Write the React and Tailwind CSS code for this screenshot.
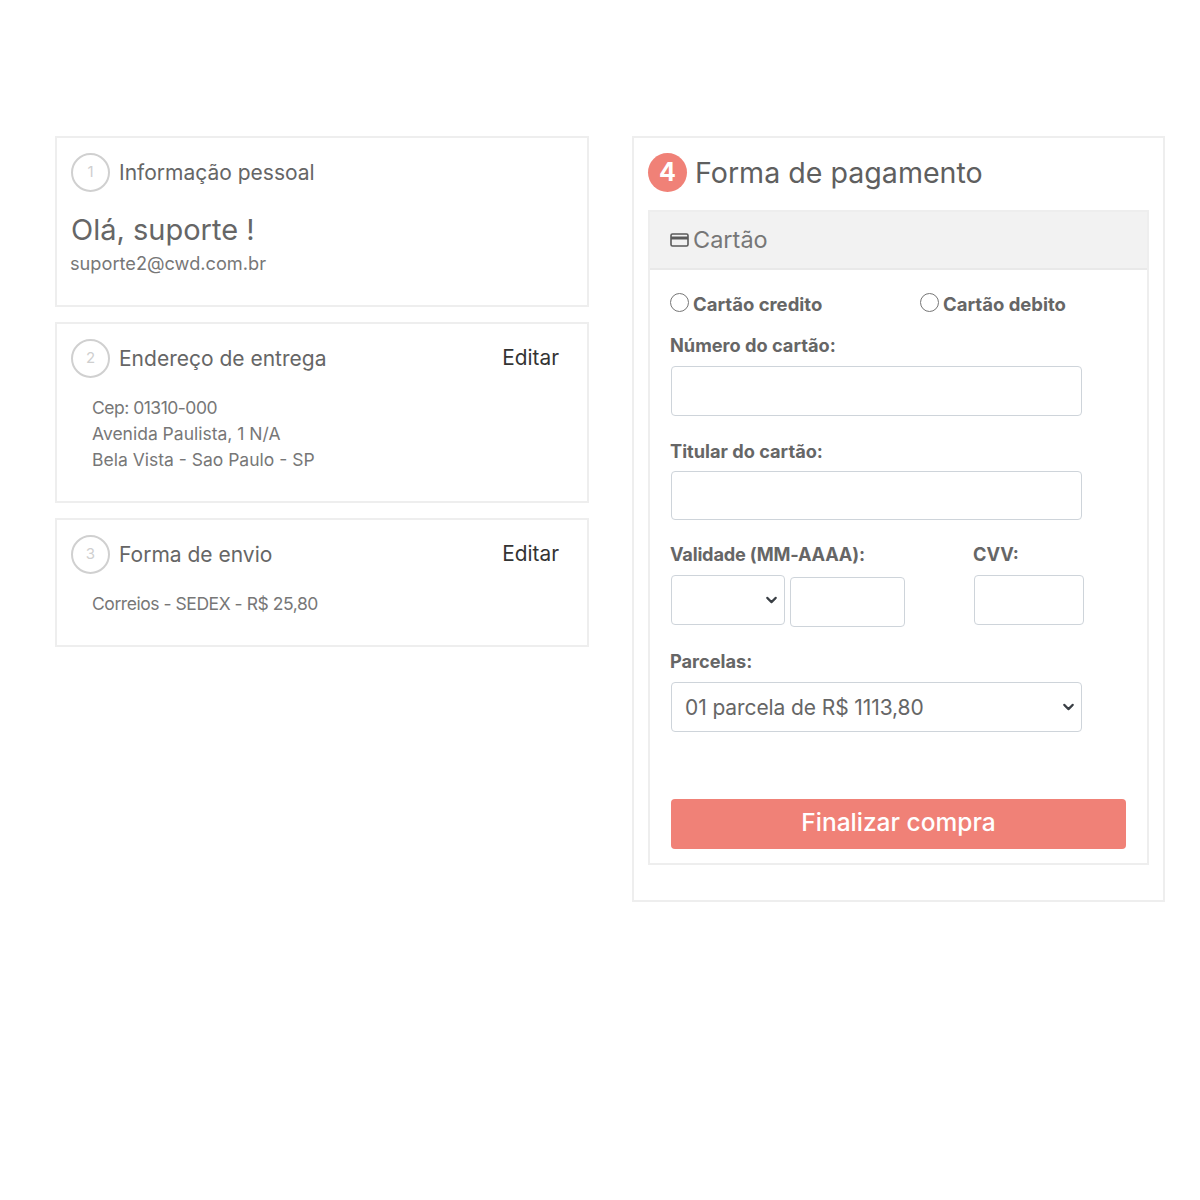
import React from 'react';
import { ChevronDown } from 'lucide-react';

const StepCircle = ({ n }) => (
  <div className="w-[39px] h-[39px] rounded-full border-2 border-[#d0d0d0] flex items-center justify-center text-[15px] text-[#cfcfcf] shrink-0">
    {n}
  </div>
);

const StepHeader = ({ n, title, edit }) => (
  <div className="flex items-center">
    <StepCircle n={n} />
    <h3 className="ml-[9px] text-[21px] leading-[30px] text-[#666666]">{title}</h3>
    {edit && <a className="ml-auto mr-[14px] -mt-[1px] text-[20.8px] leading-[30px] text-[#333333]">Editar</a>}
  </div>
);

const CardIcon = () => (
  <svg width="19" height="16" viewBox="0 0 19 16" className="shrink-0" fill="none">
    <rect x="1" y="2" width="17" height="12" rx="1.5" stroke="#5a5a5a" strokeWidth="1.6" />
    <rect x="1" y="4.5" width="17" height="3" fill="#5a5a5a" />
  </svg>
);

const inputClass = 'block bg-white border border-[#ced4da] rounded-[4px]';
const labelClass = 'block -ml-[1px] text-[18.2px] leading-[26px] font-bold text-[#666666]';

const Select = ({ className, text }) => (
  <div className={`relative ${className}`}>
    <select className={`${inputClass} w-full h-full appearance-none pl-[13px] pt-[1px] text-[21px] tracking-[-0.1px] text-[#666666]`}>
      <option>{text}</option>
    </select>
    <ChevronDown size={17} strokeWidth={3} className="absolute right-[5px] top-1/2 -translate-y-1/2 text-[#3a3f45] pointer-events-none" />
  </div>
);

export default function App() {
  return (
    <div className="min-h-[1200px] bg-white font-['Inter','Liberation_Sans',sans-serif] pt-[136px] pl-[55px] pr-[35px] flex items-start gap-[43px] text-[#666666]">
      {/* left column */}
      <div className="w-[534px] flex flex-col gap-[15px]">
        <section className="h-[171px] border-2 border-[#eeeeee] px-[14px] pt-[15px]">
          <StepHeader n="1" title="Informação pessoal" />
          <h2 className="mt-[20px] text-[29px] leading-[36px] text-[#666666]">Olá, suporte !</h2>
          <p className="mt-[3px] -ml-[1px] text-[18.2px] leading-[24px] text-[#777777]">suporte2@cwd.com.br</p>
        </section>

        <section className="h-[181px] border-2 border-[#eeeeee] px-[14px] pt-[15px]">
          <StepHeader n="2" title="Endereço de entrega" edit />
          <div className="mt-[17px] ml-[21px] text-[17.5px] leading-[26px] text-[#777777]">
            <p className="tracking-[-0.5px]">Cep: 01310-000</p>
            <p>Avenida Paulista, 1 N/A</p>
            <p>Bela Vista - Sao Paulo - SP</p>
          </div>
        </section>

        <section className="h-[129px] border-2 border-[#eeeeee] px-[14px] pt-[15px]">
          <StepHeader n="3" title="Forma de envio" edit />
          <p className="mt-[17px] ml-[21px] text-[17.5px] leading-[26px] tracking-[-0.45px] text-[#777777]">Correios - SEDEX - R$ 25,80</p>
        </section>
      </div>

      {/* right column */}
      <section className="w-[533px] h-[766px] border-2 border-[#eeeeee] px-[14px] pt-[15px]">
        <div className="flex items-center">
          <div className="w-[39px] h-[39px] rounded-full bg-[#f08177] text-white flex items-center justify-center text-[25px] font-bold shrink-0">4</div>
          <h2 className="ml-[8px] text-[28.6px] leading-[39px] text-[#5f5f5f]">Forma de pagamento</h2>
        </div>

        <div className="mt-[18px] h-[655px] border-2 border-[#eeeeee]">
          <div className="h-[58px] bg-[#f2f2f2] border-b-2 border-[#e9e9e9] flex items-center gap-[4px] pl-[20px]">
            <CardIcon />
            <span className="text-[23.5px] text-[#777777]">Cartão</span>
          </div>

          <div className="px-[21px]">
            <div className="flex items-center h-[34px] mt-[18px] -ml-[1px]">
              <label className="flex items-center w-[250px]">
                <input type="radio" name="tipo" className="w-[19px] h-[19px] m-0 -mt-[5px]" />
                <span className="ml-[4px] text-[18.5px] font-bold text-[#666666]">Cartão credito</span>
              </label>
              <label className="flex items-center">
                <input type="radio" name="tipo" className="w-[19px] h-[19px] m-0 -mt-[5px]" />
                <span className="ml-[4px] text-[18.5px] font-bold text-[#666666]">Cartão debito</span>
              </label>
            </div>

            <label className={`${labelClass} mt-[10px]`}>Número do cartão:</label>
            <input className={`${inputClass} w-[411px] h-[50px] mt-[8px]`} />

            <label className={`${labelClass} mt-[22px]`}>Titular do cartão:</label>
            <input className={`${inputClass} w-[411px] h-[49px] mt-[7px]`} />

            <div className="flex mt-[21px]">
              <div className="w-[303px]">
                <label className={`${labelClass} tracking-[-0.2px]`}>Validade (MM-AAAA):</label>
                <div className="flex gap-[5px] items-start mt-[8px]">
                  <Select className="w-[114px] h-[50px]" text="" />
                  <input className={`${inputClass} w-[115px] h-[50px] mt-[2px]`} />
                </div>
              </div>
              <div>
                <label className={labelClass}>CVV:</label>
                <input className={`${inputClass} w-[110px] h-[50px] mt-[8px]`} />
              </div>
            </div>

            <label className={`${labelClass} mt-[21px]`}>Parcelas:</label>
            <Select className="w-[411px] h-[50px] mt-[8px]" text="01 parcela de R$ 1113,80" />

            <button className="mt-[67px] w-[455px] h-[50px] pb-[4px] rounded-[4px] bg-[#f08177] text-white text-[24.5px] font-medium">
              Finalizar compra
            </button>
          </div>
        </div>
      </section>
    </div>
  );
}
